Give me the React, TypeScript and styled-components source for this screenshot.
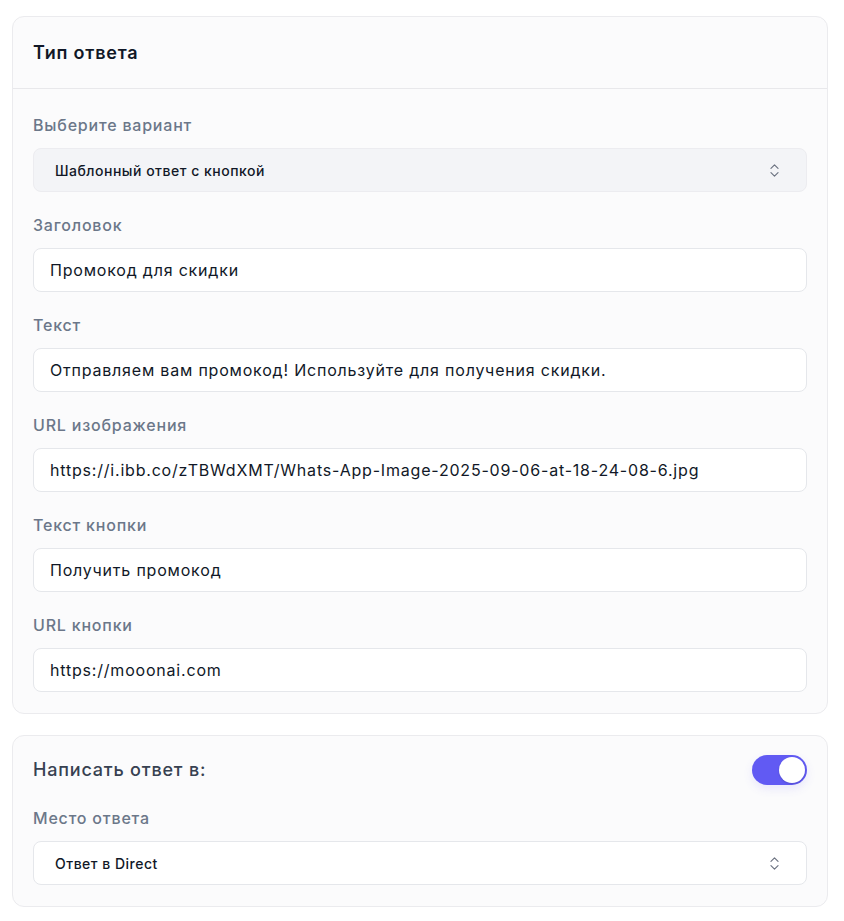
import styled, { createGlobalStyle } from 'styled-components';
import { ChevronsUpDown } from 'lucide-react';

const GlobalStyle = createGlobalStyle`
	* {
		box-sizing: border-box;
	}
	body {
		margin: 0;
		background: #ffffff;
		font-family: Inter, 'Noto Sans', sans-serif;
		color: #111827;
	}
`;

const fields = [
	{ label: 'Заголовок', value: 'Промокод для скидки' },
	{ label: 'Текст', value: 'Отправляем вам промокод! Используйте для получения скидки.' },
	{ label: 'URL изображения', value: 'https://i.ibb.co/zTBWdXMT/Whats-App-Image-2025-09-06-at-18-24-08-6.jpg' },
	{ label: 'Текст кнопки', value: 'Получить промокод' },
	{ label: 'URL кнопки', value: 'https://mooonai.com' },
];

export default function App() {
	return (
		<>
			<GlobalStyle />
			<Page>
				<Card>
					<CardHeader>
						<Title>Тип ответа</Title>
					</CardHeader>
					<CardBody>
						<Field>
							<Label>Выберите вариант</Label>
							<Select filled>
								<span>Шаблонный ответ с кнопкой</span>
								<ChevronsUpDown size={17} strokeWidth={1.6} color='#6b7280' />
							</Select>
						</Field>
						{fields.map((f) => (
							<Field key={f.label}>
								<Label>{f.label}</Label>
								<Input readOnly value={f.value} />
							</Field>
						))}
					</CardBody>
				</Card>

				<Card>
					<CardBody compact>
						<Row>
							<SubTitle>Написать ответ в:</SubTitle>
							<Toggle on>
								<Knob />
							</Toggle>
						</Row>
						<Field>
							<Label>Место ответа</Label>
							<Select>
								<span>Ответ в Direct</span>
								<ChevronsUpDown size={17} strokeWidth={1.6} color='#6b7280' />
							</Select>
						</Field>
					</CardBody>
				</Card>
			</Page>
		</>
	);
}

const Page = styled.div`
	display: flex;
	flex-direction: column;
	gap: 21px;
	width: 828px;
	padding: 16px 0 0 12px;
`;

const Card = styled.div`
	display: flex;
	flex-direction: column;
	width: 816px;
	background: #fbfbfc;
	border: 1px solid #ebebee;
	border-radius: 12px;
`;

const CardHeader = styled.div`
	display: flex;
	align-items: center;
	height: 72px;
	padding: 0 20px;
	border-bottom: 1px solid #e8e8eb;
`;

const Title = styled.h2`
	margin: 0;
	font-size: 18px;
	line-height: 28px;
	font-weight: 600;
	letter-spacing: 0.8px;
	color: #111827;
`;

const SubTitle = styled.h3`
	margin: 0;
	font-size: 18px;
	line-height: 28px;
	font-weight: 500;
	letter-spacing: 0.8px;
	color: #374151;
`;

const CardBody = styled.div<{ compact?: boolean }>`
	display: flex;
	flex-direction: column;
	gap: 21px;
	padding: ${(p) => (p.compact ? '19px 20px 21px' : '24px 20px 21px')};
`;

const Row = styled.div`
	display: flex;
	align-items: center;
	justify-content: space-between;
	height: 30px;
`;

const Field = styled.div`
	display: flex;
	flex-direction: column;
	gap: 11px;
`;

const Label = styled.label`
	font-size: 16px;
	line-height: 24px;
	font-weight: 500;
	letter-spacing: 0.8px;
	color: #6b7789;
`;

const Input = styled.input`
	height: 44px;
	width: 100%;
	padding: 0 16px;
	border: 1px solid #e5e7eb;
	border-radius: 8px;
	background: #ffffff;
	font-family: Inter, 'Noto Sans', sans-serif;
	font-size: 16px;
	letter-spacing: 0.8px;
	color: #111827;
	outline: none;
`;

const Select = styled.div<{ filled?: boolean }>`
	display: flex;
	align-items: center;
	justify-content: space-between;
	height: 44px;
	padding: 0 23px 0 21px;
	border: 1px solid ${(p) => (p.filled ? '#ececf0' : '#e5e7eb')};
	border-radius: 8px;
	background: ${(p) => (p.filled ? '#f3f4f7' : '#ffffff')};
	font-size: 14px;
	font-weight: 500;
	letter-spacing: 0.5px;
	color: #111827;
`;

const Toggle = styled.div<{ on?: boolean }>`
	display: flex;
	align-items: center;
	justify-content: ${(p) => (p.on ? 'flex-end' : 'flex-start')};
	width: 55px;
	height: 30px;
	padding: 2px;
	border-radius: 15px;
	background: ${(p) => (p.on ? '#615af3' : '#e5e7eb')};
	box-shadow: 0 4px 10px rgba(97, 90, 243, 0.12);
`;

const Knob = styled.div`
	width: 26px;
	height: 26px;
	border-radius: 50%;
	background: #ffffff;
	box-shadow: 0 1px 2px rgba(0, 0, 0, 0.15);
`;
